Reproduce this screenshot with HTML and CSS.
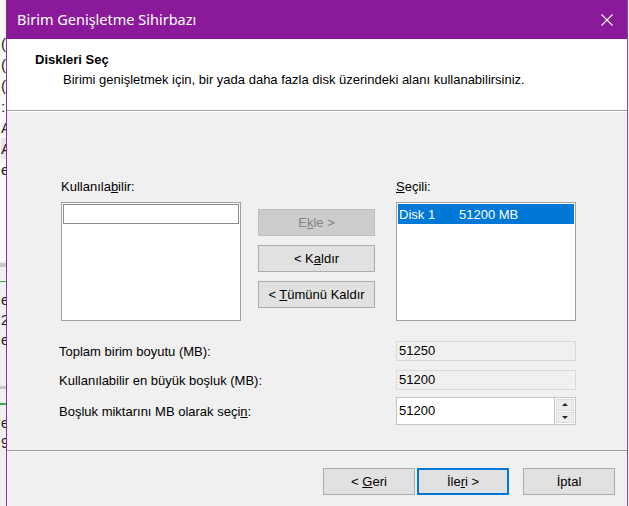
FILE: index.html
```html
<!DOCTYPE html>
<html lang="tr">
<head>
  <meta charset="UTF-8">
  <title>Birim Genişletme Sihirbazı</title>
  <link rel="stylesheet" href="styles.css">
</head>
<body>

  <div class="desk">
    <div class="behind">
      <div class="behind-top">
        <span class="ch c1">(</span>
        <span class="ch">(</span>
        <span class="ch">(</span>
        <span class="ch">:</span>
        <span class="ch">A</span>
        <span class="ch shade">A</span>
        <span class="ch">e</span>
      </div>
      <div class="behind-rule"></div>
      <div class="behind-green"></div>
      <div class="behind-low">
        <span class="ch">e</span>
        <span class="ch">2</span>
        <span class="ch">e</span>
      </div>
      <div class="behind-rule"></div>
      <div class="behind-green"></div>
      <div class="behind-low">
        <span class="ch">e</span>
        <span class="ch">9</span>
      </div>
    </div>

    <div class="window">
      <div class="titlebar">
        <span class="title">Birim Genişletme Sihirbazı</span>
        <svg class="close" width="12" height="12" viewBox="0 0 12 12">
          <path d="M0.5 0.5 L11.5 11.5 M11.5 0.5 L0.5 11.5" stroke="#fff" stroke-width="1.1" fill="none"/>
        </svg>
      </div>

      <div class="header">
        <div class="h-title">Diskleri Seç</div>
        <div class="h-sub">Birimi genişletmek için, bir yada daha fazla disk üzerindeki alanı kullanabilirsiniz.</div>
      </div>

      <div class="content">
        <div class="picker">
          <div class="col">
            <div class="lbl">Kullanıla<u>b</u>ilir:</div>
            <div class="listbox">
              <div class="focus-row"></div>
            </div>
          </div>

          <div class="mid">
            <button class="btn" disabled>E<u>k</u>le &gt;</button>
            <button class="btn">&lt; K<u>a</u>ldır</button>
            <button class="btn">&lt; <u>T</u>ümünü Kaldır</button>
          </div>

          <div class="col">
            <div class="lbl"><u>S</u>eçili:</div>
            <div class="listbox">
              <div class="sel-row"><span class="disk">Disk 1</span><span>51200 MB</span></div>
            </div>
          </div>
        </div>

        <div class="fields">
          <div class="row r1">
            <span class="f-lbl">Toplam birim boyutu (MB):</span>
            <div class="ro">51250</div>
          </div>
          <div class="row r2">
            <span class="f-lbl">Kullanılabilir en büyük boşluk (MB):</span>
            <div class="ro">51200</div>
          </div>
          <div class="row r3">
            <span class="f-lbl">Boşluk miktarını MB olarak seçi<u>n</u>:</span>
            <div class="spin">
              <div class="spin-val">51200</div>
              <div class="spin-btns">
                <div class="spin-b"><span class="up"></span></div>
                <div class="spin-b"><span class="down"></span></div>
              </div>
            </div>
          </div>
        </div>
      </div>

      <div class="footer">
        <button class="btn fbtn">&lt; <u>G</u>eri</button>
        <button class="btn fbtn focus">İle<u>r</u>i &gt;</button>
        <button class="btn fbtn cancel">İptal</button>
      </div>
    </div>
  </div>

</body>
</html>
```

FILE: styles.css
```css
html, body {
  margin: 0;
  padding: 0;
}

body {
  width: 629px;
  height: 506px;
  overflow: hidden;
  background: #f0f0f0;
  font-family: "Liberation Sans", Arial, sans-serif;
  font-size: 13px;
  color: #000;
}

.desk {
  display: flex;
  height: 506px;
}

/* window behind the dialog, only a sliver shows */
.behind {
  width: 6px;
  flex: none;
  display: flex;
  flex-direction: column;
  overflow: hidden;
  background: #f0f0f0;
}

.behind-top {
  height: 283px;
  background: #fafafa;
  display: flex;
  flex-direction: column;
  padding-top: 33px;
  box-sizing: border-box;
}

.ch {
  display: block;
  height: 21px;
  line-height: 21px;
  font-size: 15px;
  margin-left: 1px;
  color: #222;
}

.shade {
  background: #e6e6e6;
}

.behind-rule {
  height: 4px;
  margin-top: 2px;
  background: #c8c8c8;
}

.behind-green {
  height: 2px;
  margin-top: 14px;
  background: #2bb24c;
}

.behind-low {
  display: flex;
  flex-direction: column;
  padding-top: 8px;
  height: 110px;
  box-sizing: border-box;
}

.behind-low .ch {
  height: 20px;
  line-height: 20px;
  font-size: 14px;
}

/* dialog */
.window {
  width: 622px;
  height: 506px;
  flex: none;
  box-sizing: border-box;
  border-left: 1px solid #8f2aa3;
  border-right: 1px solid #9b3ab0;
  background: #f0f0f0;
  display: flex;
  flex-direction: column;
}

.titlebar {
  height: 39px;
  flex: none;
  background: #8a1a99;
  color: #fff;
  display: flex;
  align-items: center;
  padding: 0 13px 0 10px;
}

.title {
  font-family: "Noto Sans", sans-serif;
  font-size: 14.5px;
  flex: 1;
  padding-bottom: 1px;
}

.close {
  display: block;
  margin-right: 1px;
}

.header {
  height: 72px;
  flex: none;
  box-sizing: border-box;
  background: #fff;
  border-bottom: 1px solid #a0a0a0;
  padding: 13px 0 0 28px;
}

.h-title {
  font-weight: bold;
  line-height: 16px;
}

.h-sub {
  line-height: 16px;
  margin-top: 4px;
  padding-left: 28px;
}

.content {
  height: 340px;
  flex: none;
  box-sizing: border-box;
  border-top: 1px solid #fff;
  border-bottom: 1px solid #a0a0a0;
  padding: 67px 0 0 54px;
}

.picker {
  display: flex;
  align-items: flex-start;
}

.col {
  width: 180px;
  display: flex;
  flex-direction: column;
  gap: 7px;
}

.lbl {
  line-height: 16px;
}

.listbox {
  height: 119px;
  box-sizing: border-box;
  border: 1px solid #a0a0a0;
  background: #fff;
  padding: 1px;
}

.focus-row {
  height: 20px;
  box-sizing: border-box;
  border: 1px solid #8c8c8c;
}

.sel-row {
  height: 20px;
  background: #0078d7;
  color: #fff;
  display: flex;
  align-items: center;
  padding-left: 1px;
}

.disk {
  width: 60px;
}

.mid {
  width: 117px;
  margin: 30px 21px 0 17px;
  display: flex;
  flex-direction: column;
  gap: 9px;
}

.btn {
  height: 27px;
  box-sizing: border-box;
  border: 1px solid #adadad;
  background: #e1e1e1;
  font-family: "Liberation Sans", Arial, sans-serif;
  font-size: 13px;
  color: #000;
  padding: 0;
}

.btn:disabled {
  background: #cccccc;
  border-color: #bfbfbf;
  color: #838383;
}

.fields {
  margin-top: 20px;
  margin-left: -2px;
  display: flex;
  flex-direction: column;
}

.row {
  display: flex;
  align-items: center;
}

.r2 { margin-top: 9px; }
.r3 { margin-top: 7px; }

.f-lbl {
  width: 337px;
}

.ro {
  width: 180px;
  height: 20px;
  box-sizing: border-box;
  border: 1px solid #dadada;
  line-height: 18px;
  padding-left: 2px;
}

.spin {
  display: flex;
  height: 28px;
}

.spin-val {
  width: 158px;
  box-sizing: border-box;
  border: 1px solid #c4c4c4;
  border-right: none;
  background: #fff;
  padding: 5px 0 0 2px;
}

.spin-btns {
  width: 22px;
  box-sizing: border-box;
  border: 1px solid #c4c4c4;
  background: #fff;
  display: flex;
  flex-direction: column;
  gap: 1px;
  padding: 1px;
}

.spin-b {
  flex: 1;
  background: #ececec;
  border: 1px solid #dcdcdc;
  display: flex;
  align-items: center;
  justify-content: center;
}

.up, .down {
  width: 0;
  height: 0;
  border-left: 3px solid transparent;
  border-right: 3px solid transparent;
}

.up { border-bottom: 3px solid #222; }
.down { border-top: 3px solid #222; }

.footer {
  flex: 1;
  border-top: 1px solid #fff;
  display: flex;
  justify-content: flex-end;
  align-items: flex-start;
  padding: 16px 12px 0 0;
}

.fbtn {
  width: 92px;
}

.focus {
  margin-left: 2px;
  border: 2px solid #0078d7;
}

.cancel {
  margin-left: 14px;
}
```
